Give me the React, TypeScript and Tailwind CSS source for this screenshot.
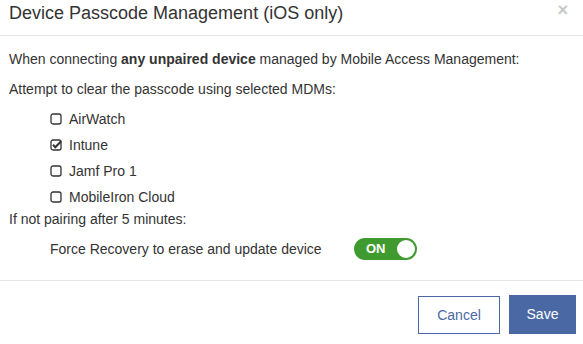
import React, { useState } from 'react';

const mdms = ['AirWatch', 'Intune', 'Jamf Pro 1', 'MobileIron Cloud'];

const Box: React.FC<{ checked: boolean }> = ({ checked }) => (
  <svg width="13" height="12" viewBox="0 0 13 12" className="shrink-0">
    <rect x="1" y="1" width="10" height="10" rx="2" fill="none" stroke="#333" strokeWidth="1.3" />
    {checked && <path d="M3 5.8 L5.3 8.2 L11.2 2.2" fill="none" stroke="#333" strokeWidth="2.1" />}
  </svg>
);

export default function App() {
  const [selected, setSelected] = useState<string[]>(['Intune']);
  const [force, setForce] = useState(true);

  const toggle = (name: string) =>
    setSelected((s) => (s.includes(name) ? s.filter((x) => x !== name) : [...s, name]));

  return (
    <div className="w-[583px] h-[344px] bg-white text-[#333] text-[14px] font-['Liberation_Sans',Arial,sans-serif]">
      {/* Header */}
      <div className="h-[36px] flex items-start justify-between border-b border-[#e5e5e5] pl-[9px] pr-[15px]">
        <h1 className="text-[18px] leading-[22px] mt-[2px] text-[#333]">Device Passcode Management (iOS only)</h1>
        <span className="text-[#c8c8c8] text-[18px] font-bold leading-none mt-[1px]">×</span>
      </div>

      {/* Body */}
      <div className="px-[9px] pt-[14px] h-[245px] border-b border-[#e5e5e5]">
        <p className="leading-[18px]">
          When connecting <b>any unpaired device</b> managed by Mobile Access Management:
        </p>
        <p className="leading-[18px] mt-[12px]">Attempt to clear the passcode using selected MDMs:</p>
        <div className="flex flex-col gap-[8px] mt-[12px] pl-[41px]">
          {mdms.map((m) => (
            <label key={m} className="flex items-center gap-[6px] h-[18px] cursor-pointer" onClick={() => toggle(m)}>
              <Box checked={selected.includes(m)} />
              <span>{m}</span>
            </label>
          ))}
        </div>
        <p className="leading-[18px] mt-[4px]">If not pairing after 5 minutes:</p>
        <div className="flex items-center pl-[41px] mt-[10px]">
          <span className="w-[304px]">Force Recovery to erase and update device</span>
          <button
            onClick={() => setForce(!force)}
            className={`w-[63px] h-[22px] rounded-full flex items-center justify-between pl-[12px] pr-[2px] ${force ? 'bg-[#3f9b2f]' : 'bg-[#bbb]'}`}
          >
            <span className="text-white font-bold text-[13px]">{force ? 'ON' : 'OFF'}</span>
            <span className="w-[18px] h-[18px] rounded-full bg-white" />
          </button>
        </div>
      </div>

      {/* Footer */}
      <div className="flex justify-end gap-[9px] pr-[7px] pt-[15px]">
        <button className="w-[82px] h-[38px] border border-[#4a69a4] text-[#4a69a4] bg-white">Cancel</button>
        <button className="w-[67px] h-[39px] bg-[#4a69a4] text-white -mt-[1px]">Save</button>
      </div>
    </div>
  );
}
